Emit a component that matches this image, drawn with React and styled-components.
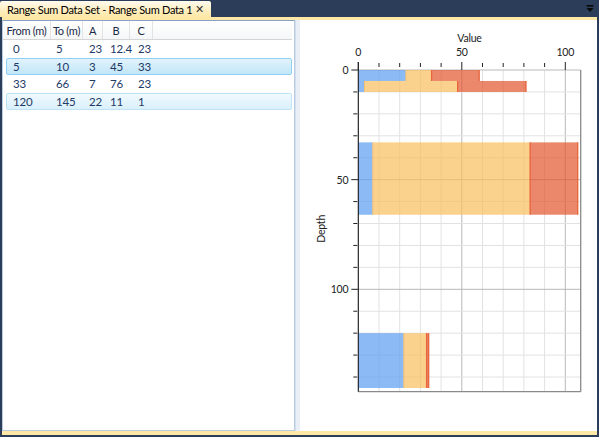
import React from "react";
import styled, { createGlobalStyle } from "styled-components";

const GlobalStyle = createGlobalStyle`
  html, body {
    margin: 0;
    padding: 0;
    background: #2c3d5a;
  }
  body {
    font-family: Lato, "Open Sans", sans-serif;
  }
`;

const columns = [
  { title: "From (m)", w: 48, dw: 45, pad: 6 },
  { title: "To (m)", w: 32, dw: 32, pad: 4 },
  { title: "A", w: 20, dw: 20, pad: 5 },
  { title: "B", w: 27, dw: 27, pad: 6 },
  { title: "C", w: 23, dw: 23, pad: 7 },
];

const rows = [
  { from: 0, to: 5, a: 23, b: 12.4, c: 23, state: "" },
  { from: 5, to: 10, a: 3, b: 45, c: 33, state: "selected" },
  { from: 33, to: 66, a: 7, b: 76, c: 23, state: "" },
  { from: 120, to: 145, a: 22, b: 11, c: 1, state: "hover" },
];

const App = () => {
  return (
    <React.Fragment>
      <GlobalStyle />
      <Frame>
        <TabStrip>
          <Tab>
            <span>Range Sum Data Set - Range Sum Data 1</span>
            <Close>✕</Close>
          </Tab>
          <MenuButton>
            <svg width="8" height="8" viewBox="0 0 8 8">
              <rect x="0.5" y="0" width="7" height="1.6" fill="#0a0a0a" />
              <polygon points="0.5,3 7.5,3 4,7" fill="#0a0a0a" />
            </svg>
          </MenuButton>
        </TabStrip>
        <DocBody>
          <GridPanel>
            <Header>
              {columns.map((c) => (
                <HeadCell key={c.title} w={c.w}>
                  {c.title}
                </HeadCell>
              ))}
              <HeadFill />
            </Header>
            <Rows>
              {rows.map((r, i) => (
                <Row key={i} state={r.state}>
                  {[r.from, r.to, r.a, r.b, r.c].map((v, j) => (
                    <Cell key={j} w={columns[j].dw} pad={columns[j].pad}>
                      {v}
                    </Cell>
                  ))}
                </Row>
              ))}
            </Rows>
          </GridPanel>
          <Splitter />
          <ChartPanel>
            <Chart rows={rows} />
          </ChartPanel>
        </DocBody>
      </Frame>
    </React.Fragment>
  );
};

// plot area inside the chart panel
const L = 58.3;
const T = 50;
const R = 280.7;
const B = 371.7;
const XS = 2.07;
const YS = 2.193;

const Chart = ({ rows }) => {
  const px = (v) => L + v * XS;
  const py = (v) => T + v * YS;
  const xTicks = [];
  for (let v = 0; v <= 100; v += 10) xTicks.push(v);
  const yTicks = [];
  for (let v = 0; v <= 140; v += 10) yTicks.push(v);

  return (
    <svg width="297" height="411" viewBox="0 0 297 411">
      <rect x={L} y={T} width={R - L} height={B - T} fill="#fff" />
      {xTicks.map((v) => (
        <line
          key={"gx" + v}
          x1={px(v)}
          x2={px(v)}
          y1={T}
          y2={B}
          stroke={v % 50 === 0 ? "#b8b8b8" : "#e2e2e2"}
          strokeWidth="1"
        />
      ))}
      {yTicks.map((v) => (
        <line
          key={"gy" + v}
          x1={L}
          x2={R}
          y1={py(v)}
          y2={py(v)}
          stroke={v % 50 === 0 ? "#b8b8b8" : "#e2e2e2"}
          strokeWidth="1"
        />
      ))}

      {rows.map((r, i) => {
        const y = py(r.from);
        const h = py(r.to) - y;
        const s1 = r.a;
        const s2 = r.a + r.b;
        const s3 = s2 + r.c;
        return (
          <g key={i}>
            <rect x={px(0)} y={y} width={s1 * XS} height={h} fill="#5a9cf0" fillOpacity="0.7" />
            <rect x={px(s1)} y={y} width={r.b * XS} height={h} fill="#f9be5e" fillOpacity="0.7" />
            <rect x={px(s2)} y={y} width={r.c * XS} height={h} fill="#e2562c" fillOpacity="0.7" />
            <line x1={px(s1)} x2={px(s1)} y1={y} y2={y + h} stroke="#f2c074" strokeWidth="1" />
            <line x1={px(s2)} x2={px(s2)} y1={y} y2={y + h} stroke="#e8643a" strokeWidth="1.3" />
            <line x1={px(s3)} x2={px(s3)} y1={y} y2={y + h} stroke="#e8643a" strokeWidth="1.3" />
          </g>
        );
      })}

      <line x1={R} x2={R} y1={T} y2={B} stroke="#8a8a8a" strokeWidth="1.3" />
      <line x1={L} x2={R} y1={B} y2={B} stroke="#8a8a8a" strokeWidth="1.3" />
      <line x1={L} x2={L} y1={T - 8} y2={B} stroke="#111" strokeWidth="1" />

      {xTicks.map((v) => (
        <line
          key={"tx" + v}
          x1={px(v)}
          x2={px(v)}
          y1={v % 50 === 0 ? T - 8 : T - 7}
          y2={v % 50 === 0 ? T : T - 3}
          stroke="#222"
          strokeWidth="1"
        />
      ))}
      {yTicks.map((v) => (
        <line
          key={"ty" + v}
          x1={v % 50 === 0 ? L - 7 : L - 5}
          x2={v % 50 === 0 ? L : L - 1}
          y1={py(v)}
          y2={py(v)}
          stroke="#222"
          strokeWidth="1"
        />
      ))}

      <AxisText x={(L + R) / 2} y={T - 28} textAnchor="middle">
        Value
      </AxisText>
      {[0, 50, 100].map((v) => (
        <AxisText key={"lx" + v} x={px(v)} y={T - 14} textAnchor="middle">
          {v}
        </AxisText>
      ))}
      {[0, 50, 100].map((v) => (
        <AxisText key={"ly" + v} x={L - 10} y={py(v) + 4} textAnchor="end">
          {v}
        </AxisText>
      ))}
      <AxisText
        x={25}
        y={(T + B) / 2 - 2}
        textAnchor="middle"
        transform={`rotate(-90 25 ${(T + B) / 2 - 2})`}
      >
        Depth
      </AxisText>
    </svg>
  );
};

const Frame = styled.div`
  width: 599px;
  height: 437px;
  display: flex;
  flex-direction: column;
  overflow: hidden;
`;

const TabStrip = styled.div`
  height: 17px;
  display: flex;
  align-items: flex-end;
  justify-content: space-between;
`;

const Tab = styled.div`
  height: 16px;
  width: 211px;
  box-sizing: border-box;
  padding: 0 7px 0 7px;
  display: flex;
  align-items: center;
  justify-content: space-between;
  background: linear-gradient(#fffbf0, #fff0c6 50%, #ffe8a6);
  border-radius: 2px 2px 0 0;
  font-size: 11px;
  letter-spacing: -0.3px;
  color: #000;
  white-space: nowrap;
`;

const Close = styled.span`
  font-size: 11px;
  color: #333;
`;

const MenuButton = styled.div`
  align-self: flex-start;
  margin: 5px 5px 0 0;
  display: flex;
`;

const DocBody = styled.div`
  flex: 1;
  margin: 0 2px 2px 2px;
  border-top: 3px solid #ffe8a6;
  border-bottom: 4px solid #ffe8a6;
  background: #fff;
  display: flex;
  min-height: 0;
`;

const GridPanel = styled.div`
  width: 294px;
  box-sizing: border-box;
  border: 1px solid #b9cbe0;
  border-top-color: #8aa2c2;
  display: flex;
  flex-direction: column;
  background: #fff;
`;

const Header = styled.div`
  height: 19px;
  box-sizing: border-box;
  display: flex;
  margin-right: 2px;
  border-bottom: 1px solid #d5d5d5;
  background: linear-gradient(#ffffff, #f5f6f7);
`;

const HeadCell = styled.div`
  width: ${(p) => p.w}px;
  box-sizing: border-box;
  border-right: 1px solid #e3e3e3;
  display: flex;
  align-items: center;
  justify-content: center;
  font-size: 11px;
  letter-spacing: -0.3px;
  color: #1b2a47;
  white-space: nowrap;
`;

const HeadFill = styled.div`
  flex: 1;
`;

const Rows = styled.div`
  display: flex;
  flex-direction: column;
  padding: 0 2px 0 3px;
`;

const Row = styled.div`
  height: 17.6px;
  box-sizing: border-box;
  display: flex;
  align-items: center;
  border: 1px solid transparent;
  border-radius: 2px;
  ${(p) =>
    p.state === "selected" &&
    `
    background: linear-gradient(#e1f3fd, #c2e6f8);
    border-color: #8fd0f3;
  `}
  ${(p) =>
    p.state === "hover" &&
    `
    background: linear-gradient(#f0f9fe, #daf0fb);
    border-color: #bfe3f6;
  `}
`;

const Cell = styled.div`
  width: ${(p) => p.w}px;
  box-sizing: border-box;
  padding-left: ${(p) => p.pad}px;
  font-size: 11.5px;
  letter-spacing: -0.2px;
  color: #1e3a66;
  white-space: nowrap;
`;

const Splitter = styled.div`
  width: 4px;
  background: #eaeff7;
  border-left: 1px solid #d4dfee;
`;

const ChartPanel = styled.div`
  flex: 1;
  display: flex;
  background: #fff;
`;

const AxisText = styled.text`
  font-family: Lato, "Open Sans", sans-serif;
  font-size: 10.5px;
  letter-spacing: -0.2px;
  fill: #222;
`;

export default App;
